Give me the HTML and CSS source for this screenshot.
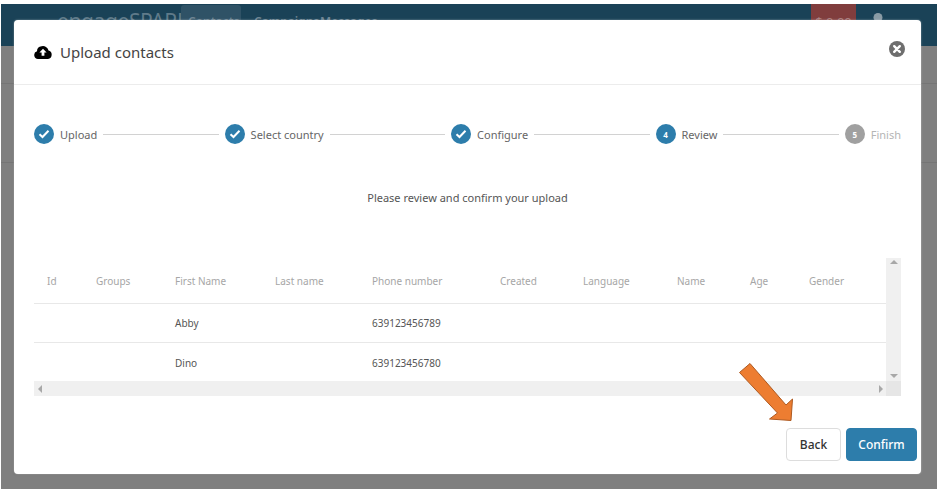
FILE: index.html
```html
<!DOCTYPE html>
<html lang="en">
<head>
<meta charset="utf-8">
<title>Upload contacts</title>
<link rel="stylesheet" href="styles.css">
</head>
<body>
<div class="screen">
  <header class="topbar">
    <span class="logo">engageSPARK</span>
    <nav class="nav">
      <a class="nav-item nav-active">Contacts</a>
      <a class="nav-item">Campaigns</a>
      <a class="nav-item">Messages</a>
    </nav>
    <span class="balance">$ 0.00</span>
    <svg class="user" viewBox="0 0 20 20" aria-hidden="true"><circle cx="10" cy="6" r="5"/><path d="M1 20c0-6 4-8 9-8s9 2 9 8z"/></svg>
  </header>
  <div class="band"></div>
  <div class="band"></div>
</div>

<section class="modal">
  <div class="modal-head">
    <svg class="cloud" viewBox="0 0 18 14" aria-hidden="true"><path fill-rule="evenodd" d="M4 14a4 4 0 0 1-1-7.8A5 5 0 0 1 7.600 1.200 5.600 5.600 0 0 1 14.500 5.600 4.300 4.300 0 0 1 14 14zM9 3.700 5.400 7.500h2.200v3.300h2.800V7.500h2.200z"/></svg>
    <h1 class="title">Upload contacts</h1>
    <svg class="close" viewBox="0 0 16 16" aria-hidden="true"><circle cx="8" cy="8" r="8" fill="#6e6e6e"/><path d="M5.200 5.200l5.600 5.600M10.800 5.200l-5.600 5.600" stroke="#fff" stroke-width="2.400" stroke-linecap="round"/></svg>
  </div>

  <ol class="steps">
    <li class="step"><span class="dot"><svg class="tick" viewBox="0 0 12 10"><path d="M1.500 5.200 4.500 8 10.500 1.800"/></svg></span><span class="step-label">Upload</span></li>
    <li class="rule"></li>
    <li class="step"><span class="dot"><svg class="tick" viewBox="0 0 12 10"><path d="M1.500 5.200 4.500 8 10.500 1.800"/></svg></span><span class="step-label">Select country</span></li>
    <li class="rule"></li>
    <li class="step"><span class="dot"><svg class="tick" viewBox="0 0 12 10"><path d="M1.500 5.200 4.500 8 10.500 1.800"/></svg></span><span class="step-label">Configure</span></li>
    <li class="rule"></li>
    <li class="step"><span class="dot">4</span><span class="step-label">Review</span></li>
    <li class="rule"></li>
    <li class="step step-todo"><span class="dot">5</span><span class="step-label">Finish</span></li>
  </ol>

  <p class="prompt">Please review and confirm your upload</p>

  <div class="table-wrap">
    <div class="table-main">
      <div class="row row-head">
        <span>Id</span><span>Groups</span><span>First Name</span><span>Last name</span><span>Phone number</span><span>Created</span><span>Language</span><span>Name</span><span>Age</span><span>Gender</span>
      </div>
      <div class="row row-first">
        <span></span><span></span><span>Abby</span><span></span><span>639123456789</span><span></span><span></span><span></span><span></span><span></span>
      </div>
      <div class="row">
        <span></span><span></span><span>Dino</span><span></span><span>639123456780</span><span></span><span></span><span></span><span></span><span></span>
      </div>
    </div>
    <div class="vbar"><i class="arrow arrow-up"></i><i class="arrow arrow-down"></i></div>
    <div class="hbar"><i class="arrow arrow-left"></i><i class="arrow arrow-right"></i></div>
    <div class="corner"></div>
  </div>

  <div class="actions">
    <button class="btn btn-back">Back</button>
    <button class="btn btn-confirm">Confirm</button>
  </div>
</section>

<svg class="callout" viewBox="0 0 938 492" aria-hidden="true">
  <path d="M739.500 372.500 750 363.500 786 405 792.500 399 791 420.500 769.500 419 777.500 413z" fill="#ed7d31" stroke="#ae5a21" stroke-width="1"/>
</svg>
</body>
</html>
```
FILE: styles.css
```css
* { box-sizing: border-box; }
html, body { margin: 0; height: 100%; background: #fff; overflow: hidden; }
body { font-family: "Noto Sans", "Open Sans", sans-serif; color: #555; }

.screen {
  width: 936px;
  height: 485px;
  margin: 4px 0 0 1px;
  background: #7f7f7f;
  overflow: hidden;
}
.topbar {
  height: 42px;
  background: #1a4257;
  display: flex;
  align-items: flex-start;
  color: #6d8492;
  font-size: 13px;
}
.logo { margin: 4px 0 0 56px; width: 124px; font-size: 21px; line-height: 26px; letter-spacing: -.4px; color: #5f7a89; }
.nav { display: flex; gap: 6px; }
.nav-item { padding: 8px 7px 0; height: 42px; margin-top: 1px; border-radius: 3px 3px 0 0; width: 60px; white-space: nowrap; font-size: 12px; font-weight: 600; }
.nav-active { background: #2f5266; }
.balance { margin-left: 426px; margin-left: auto; width: 45px; height: 42px; background: #803d3d; padding-top: 9px; text-align: center; color: #a98080; font-size: 13px; }
.user { width: 18px; height: 18px; margin: 8px 50px 0 13px; fill: #8a9ba5; }
.band { height: 79px; border-bottom: 1px solid #757575; }
.band:first-of-type { height: 38px; }

.modal {
  position: absolute;
  left: 14px;
  top: 20px;
  width: 907px;
  height: 454px;
  background: #fff;
  border-radius: 4px;
  box-shadow: 0 0 2px rgba(255,255,255,.5), -1px 1px 2px rgba(0,0,0,.12);
  display: flex;
  flex-direction: column;
  padding: 0 20px;
}
.modal-head {
  margin: 0 -20px;
  padding: 0 16px 0 20px;
  height: 65px;
  border-bottom: 1px solid #ececec;
  display: flex;
  align-items: center;
}
.cloud { width: 18px; height: 14px; fill: #000; flex: none; }
.title { margin: 0 0 0 8px; font-size: 15px; line-height: 20px; font-weight: 400; color: #444; flex: 1; }
.close { width: 16px; height: 16px; margin-bottom: 7px; }

.steps {
  list-style: none;
  margin: 39px 0 0;
  padding: 0;
  display: flex;
  align-items: center;
  gap: 6px;
  height: 20px;
}
.step { display: flex; align-items: center; gap: 6px; font-size: 11px; color: #666; white-space: nowrap; }
.dot {
  width: 20px; height: 20px; border-radius: 50%;
  background: #2d7dab; color: #fff;
  display: flex; align-items: center; justify-content: center;
  font-size: 8px; font-weight: 700;
}
.tick { width: 12px; height: 10px; fill: none; stroke: #fff; stroke-width: 2; }
.rule { flex: 1; height: 1px; background: #d2d2d2; }
.step-todo { color: #b5b5b5; }
.step-todo .dot { background: #a0a0a0; }

.prompt { margin: 45px 0 0; height: 18px; font-size: 11px; line-height: 18px; text-align: center; color: #555; }

.table-wrap {
  margin-top: 51px;
  width: 867px;
  height: 138px;
  display: grid;
  grid-template-columns: 852px 15px;
  grid-template-rows: 123px 15px;
  font-size: 10px;
}
.table-main { overflow: hidden; }
.row {
  display: grid;
  grid-template-columns: 49px 79px 100px 97px 128px 83px 94px 73px 59px 90px;
  height: 39px;
  align-items: center;
  color: #555;
}
.row span { padding-left: 13px; white-space: nowrap; }
.row-head { height: 46px; border-bottom: 1px solid #e8e8e8; color: #a6a6a6; }
.row-first { border-bottom: 1px solid #e8e8e8; }
.vbar, .hbar, .corner { background: #f0f0f0; position: relative; }
.corner { background: #e6e6e6; }
.arrow { position: absolute; width: 0; height: 0; border: 4px solid transparent; }
.arrow-up { left: 4px; top: 2px; border-top: 0; border-bottom-color: #a8a8a8; }
.arrow-down { left: 4px; bottom: 3px; border-bottom: 0; border-top-color: #a8a8a8; }
.arrow-left { left: 4px; top: 4px; border-left: 0; border-right-color: #a8a8a8; }
.arrow-right { right: 3px; top: 4px; border-right: 0; border-left-color: #a8a8a8; }

.actions { margin: 32px -16px 0 0; display: flex; justify-content: flex-end; gap: 5px; }
.btn { height: 33px; border-radius: 4px; font: 500 12px "Noto Sans", sans-serif; }
.btn-back { width: 55px; background: #fff; border: 1px solid #ddd; color: #333; }
.btn-confirm { width: 71px; background: #2d7dab; border: 1px solid #2d7dab; color: #fff; }

.callout { position: absolute; left: 0; top: 0; width: 938px; height: 492px; pointer-events: none; }
```
